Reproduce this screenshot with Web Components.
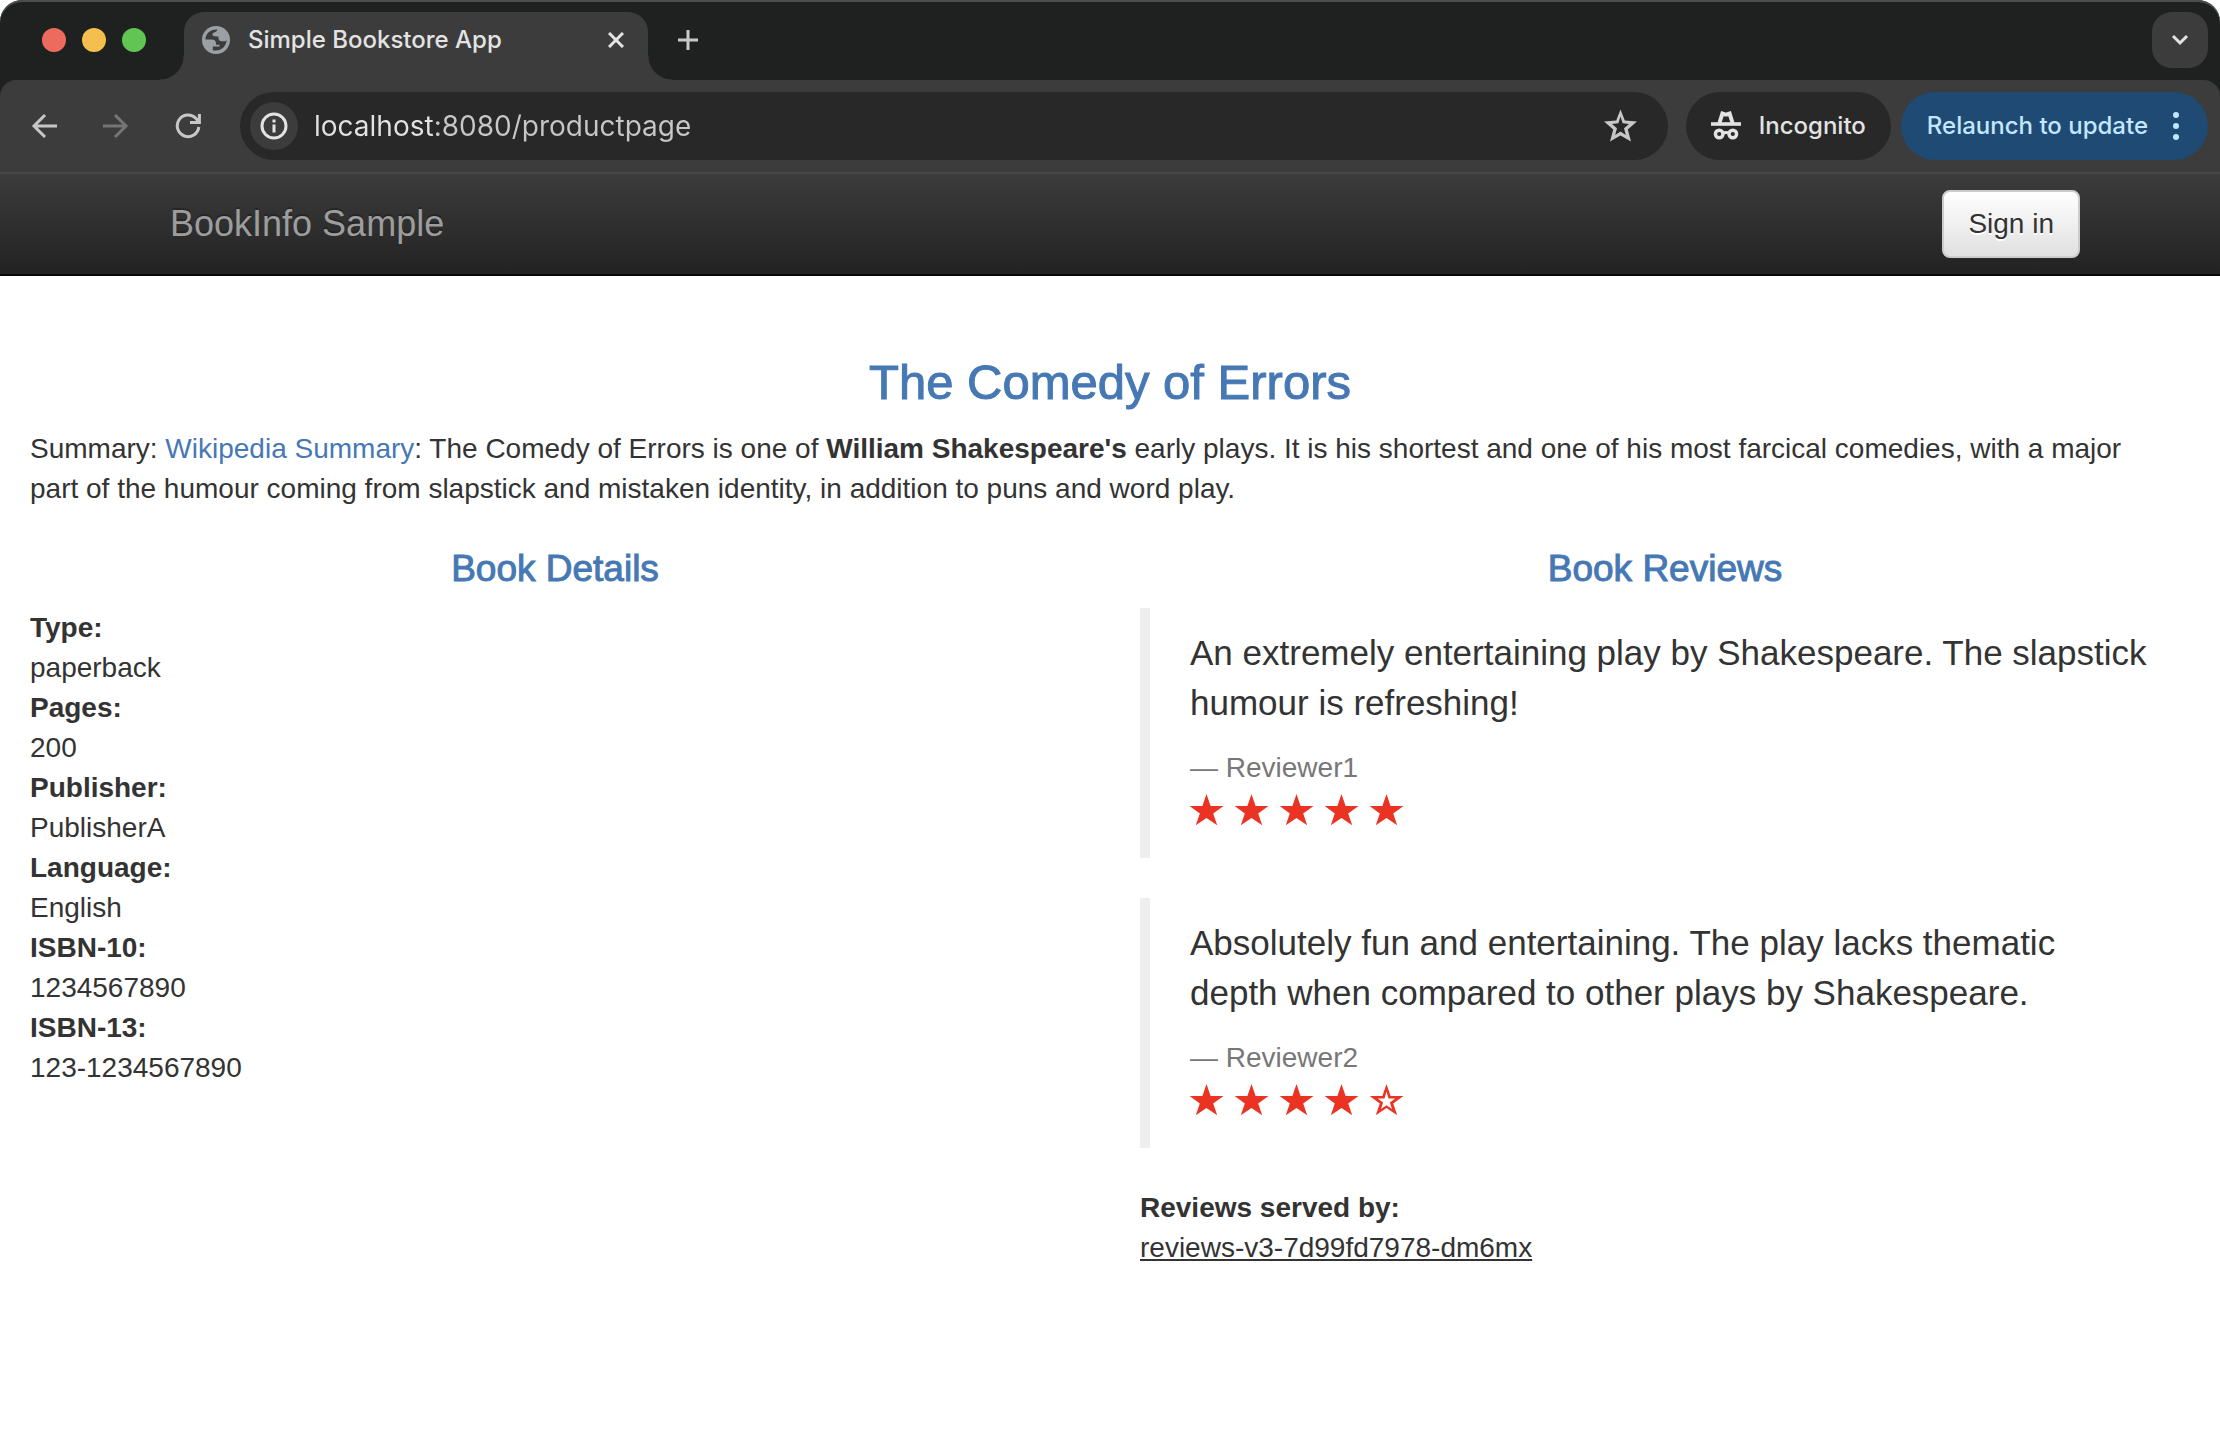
<!DOCTYPE html>
<html lang="en">
<head>
<meta charset="utf-8">
<title>Simple Bookstore App</title>
<style>
  html, body { margin: 0; background: #fff; }
  body { font-family: "Liberation Sans", Arial, sans-serif; font-size: 28px; line-height: 40px; color: #333; }
</style>
</head>
<body>
<browser-window>
  <browser-tabs slot="tabs"><span>Simple Bookstore App</span></browser-tabs>
  <browser-toolbar slot="toolbar" url="localhost:8080/productpage"></browser-toolbar>
  <site-navbar>BookInfo Sample</site-navbar>
  <product-page></product-page>
</browser-window>

<script>
const define = (name, html, setup) => {
  const template = document.createElement('template');
  template.innerHTML = html;
  customElements.define(name, class extends HTMLElement {
    constructor() {
      super();
      this.attachShadow({ mode: 'open' }).append(template.content.cloneNode(true));
    }
    connectedCallback() { if (setup) setup(this, this.shadowRoot); }
  });
};

const STAR = 'M17.5 1 L21.6 13 H34.5 L24.2 20.4 L28.2 32.2 L17.5 25 L6.8 32.2 L10.8 20.4 L.5 13 H13.4 Z';
const STAR_HOLE = 'M17.5 8.4 L15.5 15.6 H8.8 L14.1 19.4 L12 26 L17.5 22.2 L23 26 L20.9 19.4 L26.2 15.6 H19.5 Z';
const BOOKMARK = 'M17.5 .5 L21.8 11.6 L34 12.4 L24.8 20.4 L28 32.6 L17.5 26.4 L7 32.6 L10.2 20.4 L1 12.4 L13.2 11.6 Z M17.5 7.6 L15.4 14.2 L9 14.9 L14 19.2 L12.2 26 L17.5 22.6 L22.8 26 L21 19.2 L26 14.9 L19.6 14.2 Z';

define('browser-window', `
  <style>
    :host { display: flex; flex-direction: column; min-height: 100vh; background: #fff; }
    header { background: #1f2120; border-radius: 22px 22px 0 0; box-shadow: inset 0 2px #4b4e4d; }
  </style>
  <header><slot name="tabs"></slot><slot name="toolbar"></slot></header>
  <slot></slot>`);

define('browser-tabs', `
  <style>
    :host { display: flex; align-items: flex-end; height: 80px; padding: 0 12px 0 42px;
            box-sizing: border-box; font: 500 24px/32px Inter, sans-serif; color: #e3e3e3; }
    button { border: 0; padding: 0; margin: 0; background: none; color: inherit; font: inherit; display: block; }
    svg { display: block; }
    .lights { display: flex; gap: 16px; align-self: center; margin-right: 38px; }
    .lights button { width: 24px; height: 24px; border-radius: 50%; background: #ed6a5e; }
    .lights button:nth-child(2) { background: #f5bf4f; }
    .lights button:nth-child(3) { background: #61c554; }
    .tab { position: relative; display: flex; align-items: center; gap: 18px; width: 464px; height: 68px;
           padding: 0 24px 12px 18px; box-sizing: border-box; background: #3c3c3c; border-radius: 20px 20px 0 0; }
    .tab::before, .tab::after { content: ""; position: absolute; bottom: 0; width: 24px; height: 24px; }
    .tab::before { right: 100%; background: radial-gradient(circle at 0 0, transparent 23px, #3c3c3c 24px); }
    .tab::after { left: 100%; background: radial-gradient(circle at 100% 0, transparent 23px, #3c3c3c 24px); }
    .title { flex: 1; }
    .new, .search { align-self: center; }
    .new { margin-left: 30px; }
    .search { display: flex; align-items: center; justify-content: center; width: 56px; height: 56px;
              margin-left: auto; border-radius: 20px; background: #3c3c3c; }
  </style>
  <div class="lights">
    <button aria-label="Close window"></button><button aria-label="Minimise"></button><button aria-label="Zoom"></button>
  </div>
  <div class="tab">
    <svg width="28" height="28" viewBox="0 0 28 28"><circle cx="14" cy="14" r="14" fill="#9aa0a6"/>
      <path fill="#3c3c3c" d="M15.3 3.6 C9 2.8 3.6 7.4 3.4 13.4 H9.5 C12.5 13.4 14 14.8 14 17.6 V18.8 H17.5 V20.6 H10.8 V24.2 C18.2 26 24.6 20.6 24.6 14 C23.8 15.3 22.6 15.4 21 15.2 C18.6 15.6 16.5 14.8 16.5 12 V10.4 C14 10.4 10.4 10.8 10.4 8.6 C10.4 6 15.2 6.6 15.3 3.6 Z"/></svg>
    <span class="title"><slot></slot></span>
    <button aria-label="Close tab"><svg width="16" height="16" viewBox="0 0 16 16" stroke="#e3e3e3" stroke-width="3"><path d="M1 1 L15 15 M15 1 L1 15"/></svg></button>
  </div>
  <button class="new" aria-label="New tab"><svg width="20" height="20" viewBox="0 0 20 20" stroke="#c7c7c7" stroke-width="3"><path d="M10 0 V20 M0 10 H20"/></svg></button>
  <button class="search" aria-label="Search tabs"><svg width="18" height="12" viewBox="0 0 18 12" fill="none" stroke="#e3e3e3" stroke-width="3"><path d="M2 2 L9 9 L16 2"/></svg></button>`);

define('browser-toolbar', `
  <style>
    :host { display: flex; align-items: center; height: 94px; padding: 0 12px 2px 31px; box-sizing: border-box;
            background: #3c3c3c; border-radius: 16px 16px 0 0; box-shadow: inset 0 -2px #474747;
            font: 500 24px/32px Inter, sans-serif; color: #e3e3e3; }
    button { border: 0; padding: 0; margin: 0; background: none; color: inherit; font: inherit; display: block; }
    svg { display: block; flex: none; }
    nav { display: flex; gap: 46px; margin-right: 39px; }
    .address { flex: 1; display: flex; align-items: center; height: 68px; padding: 0 30px 0 10px; box-sizing: border-box;
               border-radius: 34px; background: #282828; margin-right: 18px; }
    .info { display: flex; align-items: center; justify-content: center; width: 48px; height: 48px;
            border-radius: 50%; background: #3c3c3c; }
    input { flex: 1; min-width: 0; border: 0; padding: 0; margin: 0 16px; outline: 0; font: 400 28px/40px Inter, sans-serif;
            color: #c7c7c7; -webkit-text-fill-color: transparent;
            background: linear-gradient(to right, #e3e3e3 120px, #c7c7c7 120px); -webkit-background-clip: text; background-clip: text; }
    .pill { display: flex; align-items: center; height: 68px; border-radius: 34px; white-space: nowrap; box-sizing: border-box; }
    .incognito { gap: 18px; padding: 0 25px; background: #282828; margin-right: 10px; }
    .update { gap: 25px; padding: 0 29px 0 26px; background: #1f4a73; color: #c2e7ff; }
  </style>
  <nav>
    <button aria-label="Back"><svg width="26" height="26" viewBox="0 0 26 26" fill="none" stroke="#c7c7c7" stroke-width="3"><path d="M26 13 H3 M14 2 L3 13 L14 24"/></svg></button>
    <button aria-label="Forward"><svg width="26" height="26" viewBox="0 0 26 26" fill="none" stroke="#757575" stroke-width="3"><path d="M0 13 H23 M12 2 L23 13 L12 24"/></svg></button>
    <button aria-label="Reload"><svg width="26" height="26" viewBox="0 0 26 26" fill="none" stroke="#c7c7c7" stroke-width="3"><path d="M23.8 14 A10.8 10.8 0 1 1 20.8 5.3 L24 8.8 M24.4 1 V9.6 H15"/></svg></button>
  </nav>
  <div class="address">
    <button class="info" aria-label="Site information"><svg width="28" height="28" viewBox="0 0 28 28" fill="none" stroke="#e3e3e3" stroke-width="3"><circle cx="14" cy="14" r="12"/><path d="M14 12.5 V20.5 M14 7.5 V10.5"/></svg></button>
    <input type="text" aria-label="Address">
    <button aria-label="Bookmark"><svg width="35" height="34" viewBox="0 0 35 34" fill="#c7c7c7" fill-rule="evenodd"><path d="${BOOKMARK}"/></svg></button>
  </div>
  <button class="pill incognito"><svg width="30" height="30" viewBox="0 0 30 30" fill="none" stroke="#e3e3e3" stroke-width="3"><path d="M0 13 H30" stroke-width="3.6"/><path d="M8.4 12 L11.4 2.6 L13.2 3.2 Q15 4 16.8 3.2 L18.6 2.6 L21.6 12" stroke-width="4"/><circle cx="8.2" cy="23" r="3.8" stroke-width="3.4"/><circle cx="21.8" cy="23" r="3.8" stroke-width="3.4"/><path d="M11.5 22.4 Q15 20.4 18.5 22.4"/></svg><span>Incognito</span></button>
  <button class="pill update"><span>Relaunch to update</span><svg width="6" height="28" viewBox="0 0 6 28" fill="#c2e7ff"><circle cx="3" cy="3" r="3"/><circle cx="3" cy="14" r="3"/><circle cx="3" cy="25" r="3"/></svg></button>`,
  (host, root) => { root.querySelector('input').value = host.getAttribute('url'); });

define('site-navbar', `
  <style>
    :host { display: block; background: linear-gradient(#3c3c3c, #222); border-bottom: 2px solid #080808; }
    .container { display: flex; align-items: center; justify-content: space-between; height: 100px;
                 max-width: 1940px; margin: 0 auto; padding-left: 30px; box-sizing: border-box; }
    a { color: #9d9d9d; font-size: 36px; line-height: 40px; text-decoration: none; text-shadow: 0 -2px rgba(0,0,0,.25); }
    button { font: inherit; color: #333; padding: 12px 24px; border: 2px solid #ccc; border-radius: 8px;
             background: linear-gradient(#fff, #e0e0e0); text-shadow: 0 2px #fff; }
  </style>
  <div class="container"><a href="#"><slot></slot></a><button>Sign in</button></div>`);

define('star-rating', `
  <style>
    :host { display: flex; gap: 10px; height: 50px; padding-top: 5px; box-sizing: border-box; }
    svg { display: block; width: 35px; height: 34px; fill: #eb3323; fill-rule: evenodd; }
  </style>`,
  (host, root) => {
    const score = Number(host.getAttribute('value'));
    for (let i = 0; i < 5; i++) {
      root.innerHTML += `<svg viewBox="1 0 35 34"><path d="${STAR}${i < score ? '' : STAR_HOLE}"/></svg>`;
    }
  });

define('book-review', `
  <style>
    :host { display: block; }
    blockquote { margin: 0 0 40px; padding: 20px 40px; border-left: 10px solid #eee; font-size: 35px; line-height: 50px; }
    p { margin: 0 0 20px; }
    small { display: block; font-size: 28px; line-height: 40px; color: #777; }
    svg { overflow: visible; }
  </style>
  <blockquote><p><slot></slot></p><small>— <span></span></small></blockquote>`,
  (host, root) => {
    root.querySelector('span').textContent = host.getAttribute('author');
    const rating = document.createElement('star-rating');
    rating.setAttribute('value', host.getAttribute('stars'));
    root.querySelector('blockquote').append(rating);
  });

define('product-page', `
  <style>
    :host { display: block; padding: 80px 30px 0; }
    h3, h4 { margin: 0 0 20px; text-align: center; font-weight: 400; color: #4678b4; -webkit-text-stroke: 1px #4678b4; }
    h3 { font-size: 49px; line-height: 53px; }
    h4 { font-size: 37px; line-height: 39px; }
    p { margin: 0 0 40px; }
    a { color: #4678b4; text-decoration: none; }
    .row { display: grid; grid-template-columns: 1fr 1fr; gap: 60px; }
    dl { margin: 0; }
    dt { font-weight: 700; }
    dd { margin: 0; }
  </style>
  <h3>The Comedy of Errors</h3>
  <p>Summary: <a href="#">Wikipedia Summary</a>: The Comedy of Errors is one of <b>William Shakespeare's</b> early plays. It is his shortest and one of his most farcical comedies, with a major<br>part of the humour coming from slapstick and mistaken identity, in addition to puns and word play.</p>
  <div class="row">
    <section>
      <h4>Book Details</h4>
      <dl>
        <dt>Type:</dt><dd>paperback</dd>
        <dt>Pages:</dt><dd>200</dd>
        <dt>Publisher:</dt><dd>PublisherA</dd>
        <dt>Language:</dt><dd>English</dd>
        <dt>ISBN-10:</dt><dd>1234567890</dd>
        <dt>ISBN-13:</dt><dd>123-1234567890</dd>
      </dl>
    </section>
    <section>
      <h4>Book Reviews</h4>
      <book-review author="Reviewer1" stars="5">An extremely entertaining play by Shakespeare. The slapstick humour is refreshing!</book-review>
      <book-review author="Reviewer2" stars="4">Absolutely fun and entertaining. The play lacks thematic depth when compared to other plays by Shakespeare.</book-review>
      <dl><dt>Reviews served by:</dt><dd><u>reviews-v3-7d99fd7978-dm6mx</u></dd></dl>
    </section>
  </div>`);
</script>
</body>
</html>
